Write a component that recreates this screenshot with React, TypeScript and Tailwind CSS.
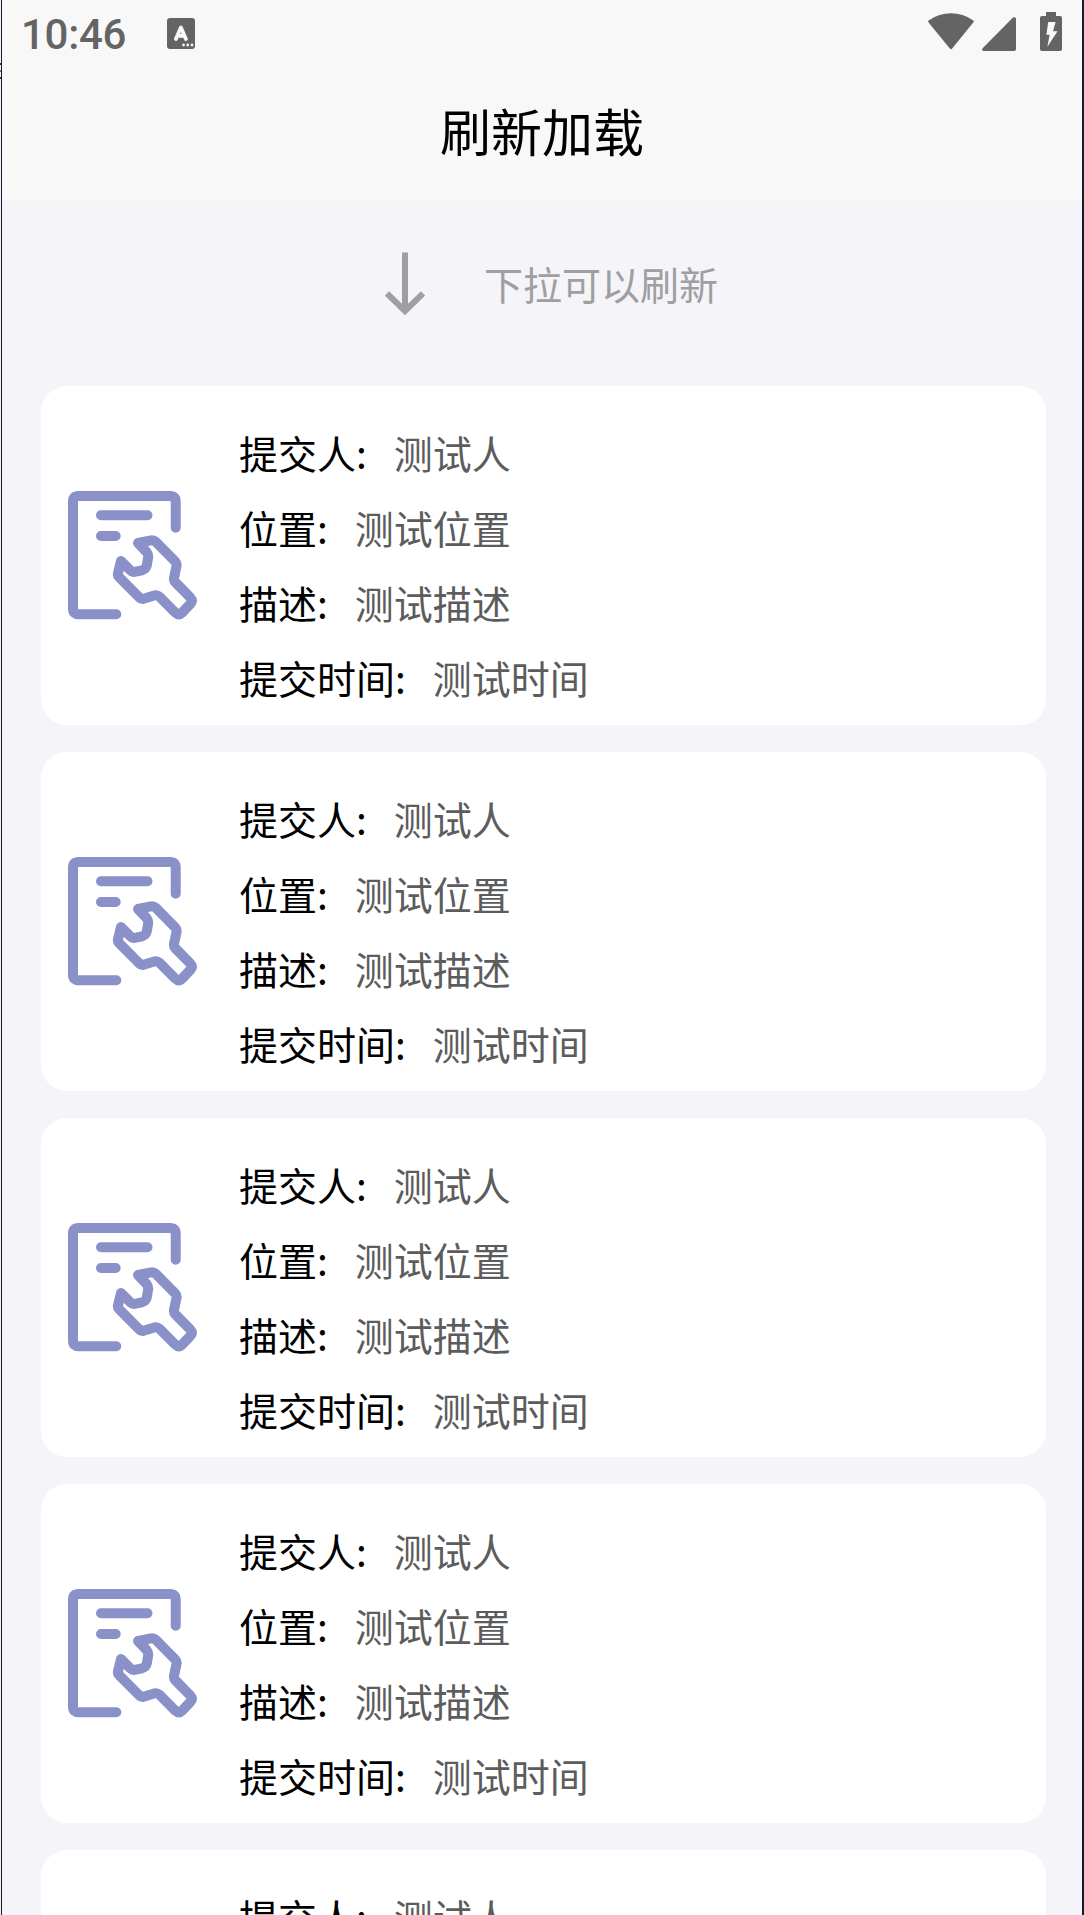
const fields = [
  { label: "提交人", value: "测试人" },
  { label: "位置", value: "测试位置" },
  { label: "描述", value: "测试描述" },
  { label: "提交时间", value: "测试时间" },
];

const records = [1, 2, 3, 4, 5];

function KeyboardIcon() {
  return (
    <svg width="28" height="31" viewBox="0 0 28 31">
      <rect width="28" height="31" rx="3" fill="#646464" />
      <path d="M8.9 21 L13.9 9.5 L18.9 21 M11 17.8 H17" fill="none" stroke="#f8f8f8" strokeWidth="3.8" strokeLinecap="round" strokeLinejoin="round" />
      <circle cx="16.5" cy="27" r="1.4" fill="#f8f8f8" />
      <circle cx="20.7" cy="27" r="1.4" fill="#f8f8f8" />
      <circle cx="25" cy="27" r="1.4" fill="#f8f8f8" />
    </svg>
  );
}

function WifiIcon() {
  return (
    <svg width="46" height="37" viewBox="0 0 46 37">
      <path d="M0.6 9.6 Q-0.4 8.2 1 7.2 Q11 0.2 23 0.2 Q35 0.2 45 7.2 Q46.2 8.2 45.3 9.6 L24.2 35.6 Q23 37 21.8 35.6 Z" fill="#646464" />
    </svg>
  );
}

function SignalIcon() {
  return (
    <svg width="34" height="34" viewBox="0 0 34 34">
      <path d="M34 1.6 V32 Q34 34 32 34 H1.8 Q-0.8 33.6 0.6 31.2 L31 0.6 Q33.4 -0.6 34 1.6 Z" fill="#646464" />
    </svg>
  );
}

function BatteryIcon() {
  return (
    <svg width="22" height="39" viewBox="0 0 22 39">
      <path d="M6 0 H16 V4 H20 Q22 4 22 6 V37 Q22 39 20 39 H2 Q0 39 0 37 V6 Q0 4 2 4 H6 Z" fill="#646464" />
      <path d="M8.2 10 H15.6 L13 19.2 H17.5 L7.4 34.8 L9.6 22.8 H6.4 Z" fill="#f8f8f8" />
    </svg>
  );
}

function ArrowDownIcon() {
  return (
    <svg width="40" height="64" viewBox="0 0 40 64" fill="none" stroke="#9f9fa1">
      <path d="M20 0.5 V59" strokeWidth="6" />
      <path d="M2 41.5 L20 59 L38 41.5" strokeWidth="6" />
    </svg>
  );
}

function RepairIcon() {
  return (
    <svg width="130" height="130" viewBox="0 0 130 130" fill="none" stroke="#8991c8" strokeWidth="10" strokeLinecap="round" strokeLinejoin="round">
      <path d="M107.7 36.8 V10.5 Q107.7 5 102.2 5 H10.5 Q5 5 5 10.5 V118 Q5 123.2 10.5 123.2 H48.3" />
      <path d="M33 24.3 H79.5 M33 45 H47.7" />
      <path d="M70 52 L83 49.3 Q85.5 48.8 87.5 50.5 L107.5 70.8 Q109 72.4 108.6 74.5 L106 87 Q105.6 89.5 107.3 91.3 L122.3 106.5 Q125.2 109.7 122.5 112.8 L114 121.8 Q110.7 124.8 107.4 121.7 L91.5 105.7 Q89.5 104 87 104.3 L75.5 107.8 Q73.2 108.3 71.4 106.6 L51 86 Q49.6 84.6 49.9 82.7 L53 70 L62.5 79.5 Q64 81.2 66.5 80.8 L74 79.3 Q78 78 78.8 74.5 L80.2 66 Q80.4 63 78.6 61 Z" />
    </svg>
  );
}

function RecordCard() {
  return (
    <li className="flex h-[339px] shrink-0 items-center rounded-[26px] bg-white pl-[27px]">
      <div className="w-[171px] pt-px">
        <RepairIcon />
      </div>
      <dl className="pt-[19px]">
        {fields.map((f) => (
          <div key={f.label} className="flex h-[75px] items-center gap-[27px] text-[39px] leading-none whitespace-nowrap">
            <dt className="text-black">{f.label}:</dt>
            <dd className="text-[#5c5c5c]">{f.value}</dd>
          </div>
        ))}
      </dl>
    </li>
  );
}

export default function App() {
  return (
    <div className="flex h-[1915px] w-[1084px] bg-[#f4f4f9] font-['Noto_Sans_CJK_SC',sans-serif]">
      <div className="w-px shrink-0 bg-[#f4f4fb] pt-[63px]">
        <div className="h-[2px] bg-[#333]" />
        <div className="mt-[5px] h-[2px] bg-[#777]" />
        <div className="mt-[5px] h-[2px] bg-[#333]" />
      </div>
      <main className="flex min-w-0 flex-1 flex-col overflow-hidden border-l border-r-2 border-l-[#15182f] border-r-[#181a2a]">
        <header className="h-[201px] shrink-0 bg-[#f8f8f8]">
          <div className="flex h-[66px] items-center pr-[20px] pl-[19px]">
            <time className="w-[146px] pt-[4px] font-[Roboto] text-[42px] leading-none font-medium tracking-[-0.3px] text-[#646464]">10:46</time>
            <KeyboardIcon />
            <div className="ml-auto flex items-end pb-[3px]">
              <div className="mb-px"><WifiIcon /></div>
              <div className="ml-[8px]"><SignalIcon /></div>
              <div className="ml-[24px]"><BatteryIcon /></div>
            </div>
          </div>
          <h1 className="flex h-[134px] items-center justify-center pb-[6px] text-[51px] leading-none text-black">刷新加载</h1>
        </header>

        <div className="flex h-[185px] shrink-0 items-center pb-[19px] pl-[383px]">
          <ArrowDownIcon />
          <span className="ml-[59px] pb-px text-[39px] leading-none text-[#9f9fa1]">下拉可以刷新</span>
        </div>

        <ul className="flex flex-col gap-[27px] pr-[36px] pl-[39px]">
          {records.map((id) => (
            <RecordCard key={id} />
          ))}
        </ul>
      </main>
    </div>
  );
}
